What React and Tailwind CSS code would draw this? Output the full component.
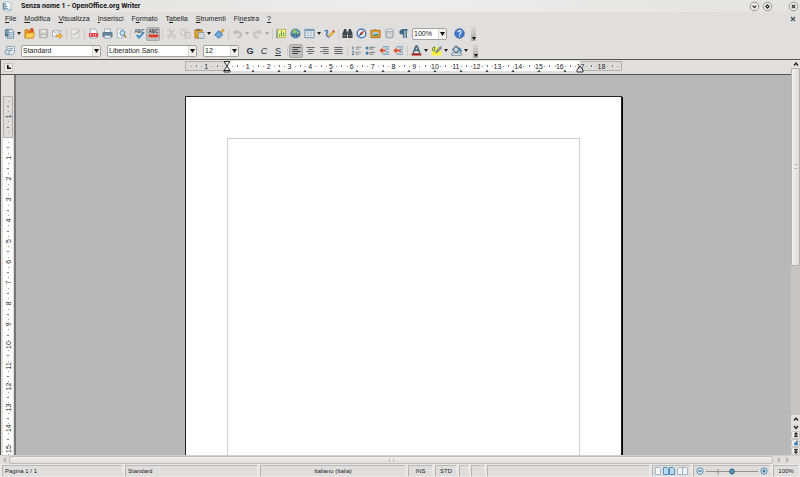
import React from "react";

const CM = 20.8;

function Svg({ children, className = "size-3" }) {
  return (
    <svg viewBox="0 0 12 12" className={className} fill="none" aria-hidden="true">
      {children}
    </svg>
  );
}

const sheet = (
  <path d="M2.5 1h5l2 2v8h-7z" fill="#f4f7f9" stroke="#7d97a8" strokeWidth="0.8" />
);

const icons = {
  writer: (
    <>
      <path d="M3.5 1h4.5l2 2v8h-6.5z" fill="#eef5f8" stroke="#93aebd" strokeWidth="0.7" />
      <path d="M1.5 2v8M1.5 3.5h3M1.5 6h4M1.5 8.5h5" stroke="#5b8ba6" strokeWidth="1.2" />
      <path d="M6 9.5h4" stroke="#78a8bf" />
    </>
  ),
  new: (
    <>
      <path d="M3.5 1.5h5l2 2v7.500h-7z" fill="#dfeaf1" stroke="#54788f" strokeWidth="0.9" />
      <path d="M1 1.500h4v7.500H1z" fill="#4b7490" />
      <path d="M2 3.500h2M2 5.500h2" stroke="#c9dbe6" strokeWidth="0.9" />
      <path d="M5.500 5h4M5.500 7h4M4 9h5" stroke="#6b8ea3" strokeWidth="0.8" />
    </>
  ),
  open: (
    <>
      <path d="M1 2h4l1 1h4.500v8H1z" fill="#e79a20" stroke="#b86d0c" strokeWidth="0.7" />
      <path d="M2.500 5.500h9L10 11H1z" fill="#ffd35a" stroke="#cf8a17" strokeWidth="0.7" />
      <path d="M5.500 5 9 1.500M6.500 1h3v3" stroke="#d8421e" strokeWidth="1.4" />
    </>
  ),
  save: (
    <>
      <rect x="1.500" y="1.500" width="9" height="9" rx="1" fill="#c9c9c8" stroke="#a7a7a6" />
      <path d="M3.500 2h5v3h-5z" fill="#e7e7e6" />
      <path d="M3 7h6v3.500H3z" fill="#dededd" stroke="#aaa" strokeWidth="0.6" />
    </>
  ),
  mail: (
    <>
      <path d="M.5 3h8.500v6H.5z" fill="#fafafa" stroke="#8f9aa3" strokeWidth="0.8" />
      <path d="m.7 3.300 4 3 4-3" stroke="#8f9aa3" strokeWidth="0.8" />
      <path d="M5 7.500h3V5.700L11.700 8.600 8 11.300V9.700H5z" fill="#f6b830" stroke="#b97e14" strokeWidth="0.5" />
    </>
  ),
  edit: (
    <>
      <path d="M1.500 1.500h8v9.500h-8z" fill="#e9e9e8" stroke="#bdbdbc" strokeWidth="0.8" />
      <path d="m4 8 1-2 5.500-4.500 1 1.200L6 7.500z" fill="#c2c2c1" />
      <path d="m3 6 1.500 3" stroke="#b5b5b4" />
    </>
  ),
  pdf: (
    <>
      {sheet}
      <path d="M1 5.500h10V9.500H1z" fill="#dc2f2f" />
      <path d="M2.700 8.500v-2h1.100M6 6.500v2M8.300 8.500v-2h1.300" stroke="#fff" strokeWidth="0.8" />
    </>
  ),
  print: (
    <>
      <path d="M3 1h6v4H3z" fill="#fff" stroke="#70879a" strokeWidth="0.7" />
      <path d="M1 5h10v4.500H1z" fill="#648aa5" stroke="#3f6179" strokeWidth="0.7" />
      <path d="M2.500 8h7v3h-7z" fill="#f2f5f7" stroke="#6c8292" strokeWidth="0.7" />
    </>
  ),
  preview: (
    <>
      <path d="M1.500 1h6v9.500h-6z" fill="#f8fafb" stroke="#97a9b5" strokeWidth="0.8" />
      <circle cx="7" cy="5.500" r="2.700" fill="#c0e0f4" stroke="#4a7fa3" />
      <path d="m8.800 7.500 2.200 3" stroke="#b07a2b" strokeWidth="1.600" />
    </>
  ),
  spell: (
    <>
      <Abc color="#39536a" />
      <path d="m3 7.500 2.500 3L10.500 5" stroke="#4490c4" strokeWidth="2.200" />
    </>
  ),
  auto: (
    <>
      <Abc color="#3c4852" />
      <path d="m.8 9.500 1.700-1.700 1.700 1.700 1.800-1.700 1.800 1.700 1.700-1.700 1.700 1.700" stroke="#e03a22" strokeWidth="2.200" />
    </>
  ),
  cut: (
    <>
      <path d="m3 1 5 7.500M9 1 4 8.500" stroke="#bcbcbb" strokeWidth="1.200" />
      <circle cx="3" cy="9.500" r="1.500" stroke="#bcbcbb" />
      <circle cx="9" cy="9.500" r="1.500" stroke="#bcbcbb" />
    </>
  ),
  copy: (
    <>
      <path d="M1 1.500h6v6H1zM5 5h6v6H5z" fill="#e4e4e3" stroke="#bcbcbb" strokeWidth="0.900" />
      <path d="M6 7.500h4M6 9h4M2 3.500h4" stroke="#c6c6c5" strokeWidth="0.700" />
    </>
  ),
  paste: (
    <>
      <path d="M1 2h8v9H1z" fill="#e5a52c" stroke="#9d6a13" strokeWidth="0.800" />
      <path d="M3 1h4v2H3z" fill="#6d6d6d" />
      <path d="M5 5h6v6H5z" fill="#f1f5f9" stroke="#6d8599" strokeWidth="0.800" />
      <path d="M6 7h4M6 9h4" stroke="#8ba2b5" strokeWidth="0.700" />
    </>
  ),
  brush: (
    <>
      <path d="m7 4 3-3.200 1.400 1.300L8.500 5.500z" fill="#e8ad36" stroke="#a87412" strokeWidth="0.500" />
      <path d="M5 3 9.500 7.200 5.500 11.300.8 7.500z" fill="#5fa4db" stroke="#2f72ad" strokeWidth="0.900" />
      <path d="m3 7.500 2.500 2M4.500 5.500 7 8" stroke="#b4daf5" strokeWidth="0.800" />
    </>
  ),
  undo: (
    <>
      <path d="M3 4.500h4a2.700 2.700 0 0 1 0 5.500H5.500" stroke="#bdbdbc" strokeWidth="2.200" />
      <path d="M4.800 1v7L.8 4.500z" fill="#bdbdbc" />
    </>
  ),
  redo: (
    <>
      <path d="M9 4.500H5A2.700 2.700 0 0 0 5 10h1.500" stroke="#c2c2c1" strokeWidth="2.200" />
      <path d="M7.200 1v7l4-3.500z" fill="#c2c2c1" />
    </>
  ),
  chart: (
    <>
      <path d="M1.500 1.500h9v9h-9z" fill="#fbf58d" stroke="#b7a832" strokeWidth="0.900" />
      <path d="M4 9V6.500M6 9V3M8.300 9V5" stroke="#4c9a5a" strokeWidth="1.200" />
      <path d="M1 1.500v9.500" stroke="#57829d" />
    </>
  ),
  globe: (
    <>
      <circle cx="6" cy="6" r="5" fill="#4f9dce" stroke="#2f6688" strokeWidth="0.700" />
      <path d="M3 2.500 6 1.500l2 2-2 2H3zM7 5l3-1-1 3z" fill="#9ccd4f" />
      <path d="M1.500 7.800h4M6.500 7.800h4" stroke="#3b5361" strokeWidth="2.400" />
      <path d="M2.500 7.800h2M7.500 7.800h2" stroke="#c7d6de" strokeWidth="0.900" />
    </>
  ),
  table: (
    <>
      <path d="M1 1.500h10v9H1z" fill="#fff" stroke="#6789a1" />
      <path d="M1 2.500h10" stroke="#6f9dbd" strokeWidth="2" />
      <path d="M4.300 2v8.500M7.600 2v8.500M1 5.500h10M1 8h10" stroke="#93acbd" strokeWidth="0.800" />
    </>
  ),
  draw: (
    <>
      <path d="M.8 3.500c3-2 4 .5 2.500 2s0 4.500 3 4" stroke="#3d78ae" strokeWidth="1.500" />
      <path d="m5 9.500 1-2.500 4.300-4 1.500 1.600-4.500 4z" fill="#f8c44a" stroke="#b77b18" strokeWidth="0.600" />
      <path d="m9 3.300 1.300-1.300 1.500 1.700-1.200 1.300z" fill="#df4c3c" />
    </>
  ),
  find: (
    <>
      <path d="M2.500 1h2L5.500 5v6H.5V6zM7.500 1h2l2 5v5h-5V5z" fill="#3d454b" />
      <path d="M5 4h2v3H5z" fill="#596268" />
      <path d="M1.500 8.500h2.800M7.700 8.500h2.800" stroke="#8f9ba3" />
    </>
  ),
  navigator: (
    <>
      <circle cx="6" cy="6" r="4.700" fill="#eef6fc" stroke="#2f6fb2" strokeWidth="1.400" />
      <path d="M9.500 2.500 7.200 7.200 4.800 4.800z" fill="#df3b26" />
      <path d="M2.500 9.500 4.800 4.800l2.400 2.400z" fill="#52616c" />
    </>
  ),
  gallery: (
    <>
      <path d="M1 2.500h10v8H1z" fill="#e79f2e" stroke="#a9650f" strokeWidth="0.900" />
      <path d="M3 4.500h6v4H3z" fill="#9dd0ed" />
      <path d="m3 8.500 2-2 1.500 1L8 6l1 2.500z" fill="#3d7e45" />
      <path d="M5 2.200 6 1l1 1.200" stroke="#8c6a35" strokeWidth="0.700" />
    </>
  ),
  sources: (
    <>
      <path d="M2 2.500v7c0 2 8 2 8 0v-7z" fill="#c2c9cd" stroke="#808c94" strokeWidth="0.800" />
      <ellipse cx="6" cy="2.500" rx="4" ry="1.400" fill="#eef1f3" stroke="#8b979f" strokeWidth="0.800" />
      <path d="M4 5.500v4M6 6v4M8 5.500v4" stroke="#e3e7ea" strokeWidth="0.700" />
    </>
  ),
  marks: (
    <>
      <path d="M6 1.500H4.200a2.700 2.700 0 0 0 0 5.500H6z" fill="#3f6b85" />
      <path d="M6.300 1.500V11M9 1.500V11M4.500 1.900h6" stroke="#3f6b85" strokeWidth="1.500" />
    </>
  ),
  help: (
    <>
      <circle cx="6" cy="6" r="5.200" fill="#3f78c9" stroke="#275196" strokeWidth="0.700" />
      <path d="M4.200 4.600c0-2.300 3.600-2.300 3.600 0 0 1.300-1.800 1.300-1.800 2.900M6 8.500v1.200" stroke="#fff" strokeWidth="1.200" />
    </>
  ),
  styles: (
    <>
      <path d="M3 1.500h8.500v6.500L9 10.500H4z" fill="#e5eef4" stroke="#7b98ab" strokeWidth="0.900" />
      <path d="M5 4h4.500M6 6h3.500" stroke="#6f94ad" strokeWidth="1" />
      <circle cx="3.500" cy="7.800" r="2.500" fill="#d3dfe7" stroke="#6d899c" strokeWidth="0.900" />
    </>
  ),
  alignLeft: <path d="M1.500 2.700h9M1.500 4.900h6M1.500 7.100h9M1.500 9.300h6" stroke="#3f4448" strokeWidth="1.300" />,
  alignCenter: <path d="M1.500 2.700h9M3.500 4.900h5M1.500 7.100h9M3.500 9.300h5" stroke="#666b6f" strokeWidth="1.200" />,
  alignRight: <path d="M1.500 2.700h9M4.500 4.900h6M1.500 7.100h9M4.500 9.300h6" stroke="#666b6f" strokeWidth="1.200" />,
  justify: <path d="M1.500 2.700h9M1.500 4.900h9M1.500 7.100h9M1.500 9.300h9" stroke="#5f6569" strokeWidth="1.300" />,
  numbered: (
    <>
      <path d="M2 1.500v3.500M1.200 7h1.600v1.500L1.200 10.500h2" stroke="#3f7195" />
      <path d="M5 2.500h6M5 4.500h4M5 8h6M5 10h4" stroke="#7d8488" strokeWidth="0.900" />
    </>
  ),
  bullets: (
    <>
      <circle cx="2.300" cy="3.300" r="1.700" fill="#3f7da8" />
      <circle cx="2.300" cy="8.800" r="1.700" fill="#3f7da8" />
      <path d="M5 2.500h6M5 4.500h4M5 8h6M5 10h4" stroke="#6a7074" strokeWidth="1" />
    </>
  ),
  indentLess: (
    <>
      <path d="M4 2h7M7 4.500h4M7 7.500h4M4 10h7" stroke="#4a8fbe" />
      <path d="M.3 6 4 2.700V5h3v2H4v2.300z" fill="#d9502b" />
    </>
  ),
  indentMore: (
    <>
      <path d="M4 2h7M7 4.500h4M7 7.500h4M4 10h7" stroke="#4a8fbe" />
      <path d="M.3 6 4 2.700V5h4.500v2H4v2.300z" fill="#d9502b" />
    </>
  ),
  fontColor: (
    <>
      <path d="m2.500 8.500 3-7.500h1l3 7.500M3.800 5.700h4.400" stroke="#41657e" strokeWidth="1.700" />
      <path d="M.7 9h10.600v2.500H.7z" fill="#a52a24" />
    </>
  ),
  highlight: (
    <>
      <path d="M.8 2.500h7.700l2.700 5v4H.8z" fill="#fbf53b" />
      <path d="M1.500 3.500 4 2v4l-2 .5z" stroke="#557085" />
      <path d="m5 8.500 1-2.500 4.300-4.500 1.500 1.500L7.500 7.500z" fill="#90a3b1" stroke="#4f6474" strokeWidth="0.700" />
    </>
  ),
  fill: (
    <>
      <path d="M1.800 5 5.500 1.200l4 4.300-4 3z" fill="#c9dbe6" stroke="#436277" strokeWidth="1.200" />
      <path d="M8 3c3 1 3 2.500 2.800 5" stroke="#3e8ac0" strokeWidth="1.700" />
      <path d="M.8 8.800h10.400v2.500H.8z" fill="#f0f3f4" stroke="#5e7686" strokeWidth="0.800" />
    </>
  ),
};

function Abc({ color }) {
  return (
    <text x="6" y="5" textAnchor="middle" fontSize="5" fontWeight="700" fill={color}>
      ABC
    </text>
  );
}

function Tool({ icon, label, pressed, children }) {
  return (
    <button
      type="button"
      aria-label={label}
      className={
        pressed
          ? "flex h-3.5 w-3.5 shrink-0 items-center justify-center rounded-xs border border-[#aaa9a8] bg-[#bfbebd]"
          : "flex h-3.5 w-3.5 shrink-0 items-center justify-center"
      }
    >
      {icon ? <Svg className="size-[11px] shrink-0">{icons[icon]}</Svg> : children}
    </button>
  );
}

function Drop({ label, dim }) {
  return (
    <button type="button" aria-label={label} className="flex h-3.5 w-1.5 shrink-0 items-center justify-center">
      <svg viewBox="0 0 4 3" className="h-[3px] w-1" aria-hidden="true">
        <path d="M0 0h4L2 3z" fill={dim ? "#aaa" : "#222"} />
      </svg>
    </button>
  );
}

function Sep() {
  return (
    <span className="flex h-2.5 w-1 shrink-0 justify-center">
      <span className="w-px bg-[#cbcac9]" />
    </span>
  );
}

function Combo({ label, value, className }) {
  return (
    <div className={`relative h-3 shrink-0 ${className}`}>
      <select
        aria-label={label}
        defaultValue={value}
        className="block h-3 w-full appearance-none rounded-xs border border-[#a3a2a1] bg-white pl-px text-[7px] leading-[10px] text-[#222] outline-none"
      >
        <option>{value}</option>
      </select>
      <span className="pointer-events-none absolute inset-y-px right-px flex w-2 items-center justify-center border-l border-[#dad9d8] bg-[#f0efee]">
        <svg viewBox="0 0 5 4" className="h-1 w-[5px]" aria-hidden="true">
          <path d="M0 0h5L2.500 4z" fill="#111" />
        </svg>
      </span>
    </div>
  );
}

function Overflow() {
  return (
    <button
      type="button"
      aria-label="Altri comandi"
      className="flex h-3.5 w-[5px] shrink-0 items-end justify-center bg-linear-to-b from-[#dad9d8] to-[#aaa9a8] pb-px"
    >
      <svg viewBox="0 0 4 3" className="h-[3px] w-1" aria-hidden="true">
        <path d="M0 0h4L2 3z" fill="#111" />
      </svg>
    </button>
  );
}

const menus = [
  ["", "F", "ile"],
  ["", "M", "odifica"],
  ["", "V", "isualizza"],
  ["", "I", "nserisci"],
  ["F", "o", "rmato"],
  ["T", "a", "bella"],
  ["", "S", "trumenti"],
  ["Fi", "n", "estra"],
  ["", "?", ""],
];

function WindowButton({ label, d }) {
  return (
    <button type="button" aria-label={label} className="flex size-[11px] items-center justify-center">
      <Svg className="size-[11px]">
        <circle cx="6" cy="6" r="4.700" fill="#eeedec" stroke="#8d8c8b" />
        <path d={d} stroke="#2c2c2c" strokeWidth="1.300" />
      </Svg>
    </button>
  );
}

function ticks(from, to, origin) {
  const out = [];
  for (let q = from; q <= to; q++) {
    if (q % 4 !== 0) out.push({ at: origin + (q * CM) / 4, half: q % 2 === 0 });
  }
  return out;
}

function HorizontalRuler() {
  const origin = 42;
  const tabs = Array.from({ length: 13 }, (_, i) => origin + (i + 1) * 1.25 * CM);
  return (
    <svg width="437" height="13" viewBox="0 0 437 13" className="shrink-0" role="img" aria-label="Righello orizzontale">
      <rect x="0.500" y="1.500" width="436" height="9" fill="#dddcdb" stroke="#b2b1b0" />
      <rect x={origin} y="1" width="353" height="10" fill="#fff" />
      {ticks(-7, 75, origin).map((t) => (
        <rect key={t.at} x={Math.round(t.at)} y={t.half ? 5 : 6} width="1" height={t.half ? 2 : 1} fill={t.half ? "#777" : "#999"} />
      ))}
      <g fontSize="7" fill="#222" textAnchor="middle">
        <text x={origin - CM} y="8.500">1</text>
        {Array.from({ length: 18 }, (_, i) => (
          <text key={i} x={origin + (i + 1) * CM} y="8.500">{i + 1}</text>
        ))}
      </g>
      {tabs.map((x) => (
        <path key={x} d={`M${x - 1.500} 12h3l-1.500-2.500z`} fill="#444" />
      ))}
      <path d={`M${origin - 3} 1.500h6l-3 4.500zM${origin - 3} 10.500h6l-3-4.500zM${origin - 3} 12h6v-1.500h-6z`} fill="#e8e8e8" stroke="#222" strokeWidth="0.900" />
      <path d="M392 12v-2l3-4 3 4v2z" fill="#e8e8e8" fillOpacity="0.600" stroke="#222" strokeWidth="0.900" />
    </svg>
  );
}

function VerticalRuler() {
  const origin = 41;
  return (
    <svg width="10" height="560" viewBox="0 0 10 560" className="shrink-0" role="img" aria-label="Righello verticale">
      <rect x="0.500" y="0.500" width="9" height="41" fill="#dddcdb" stroke="#b2b1b0" />
      <rect x="0" y="42" width="10" height="518" fill="#fff" />
      {ticks(-7, 98, origin).map((t) => (
        <rect key={t.at} x={t.half ? 4 : 5} y={Math.round(t.at)} width={t.half ? 2 : 1} height="1" fill={t.half ? "#777" : "#999"} />
      ))}
      <g fontSize="7" fill="#222" textAnchor="middle">
        {[-1, ...Array.from({ length: 15 }, (_, i) => i + 1)].map((n) => (
          <text key={n} transform={`translate(7.500 ${origin + n * CM}) rotate(-90)`}>{Math.abs(n)}</text>
        ))}
      </g>
    </svg>
  );
}

function ScrollButton({ label, d, boxed, color = "#222", className = "h-2 w-full" }) {
  return (
    <button
      type="button"
      aria-label={label}
      className={`flex shrink-0 items-center justify-center ${className} ${boxed ? "rounded-xs border border-[#c6c5c4] bg-[#efeeed]" : ""}`}
    >
      <svg viewBox="0 0 6 6" className="size-1.5 shrink-0" fill="none" aria-hidden="true">
        <path d={d} stroke={color} strokeWidth="1.400" />
      </svg>
    </button>
  );
}

function Cell({ className, children }) {
  return (
    <div
      className={`flex h-[11px] min-w-0 items-center border-t border-l border-t-[#bab9b8] border-l-[#b5b4b3] bg-[#dfdedd] px-0.5 ${className}`}
    >
      {children}
    </div>
  );
}

function ZoomButton({ label, d }) {
  return (
    <button type="button" aria-label={label} className="size-2 shrink-0">
      <Svg className="size-2">
        <circle cx="6" cy="6" r="4.800" fill="#d7e8f3" stroke="#4d83ab" strokeWidth="1.300" />
        <path d={d} stroke="#28587c" strokeWidth="1.600" />
      </Svg>
    </button>
  );
}

export default function App() {
  return (
    <div className="flex h-screen flex-col overflow-hidden bg-[#e0dfde] font-['Liberation_Sans',Arial,sans-serif] text-[7px] leading-[10px] text-[#222]">
      <header className="flex h-3 shrink-0 items-center bg-linear-to-r from-[#e3e2e1] via-[#ededed] to-[#e3e3e2] pr-px pl-0.5">
        <Svg className="size-[11px]">{icons.writer}</Svg>
        <h1 className="ml-2 flex-1 font-[Roboto,'Liberation_Sans',sans-serif] text-[7px] font-bold text-[#111]">
          Senza nome 1 - OpenOffice.org Writer
        </h1>
        <div className="flex items-center gap-0.5">
          <WindowButton label="Riduci a icona" d="m4 5 2 2.200L8 5" />
          <WindowButton label="Ingrandisci" d="M6 4.200 7.800 6 6 7.800 4.200 6z" />
        </div>
        <div className="ml-[15px] flex">
          <WindowButton label="Chiudi" d="m4.200 4.200 3.600 3.600M7.800 4.200 4.200 7.800" />
        </div>
      </header>

      <nav className="flex h-[13px] shrink-0 items-center justify-between pr-1 pl-[5px]">
        <div className="flex gap-2">
          {menus.map(([a, key, b]) => (
            <button type="button" key={a + key + b} className="leading-[10px]">
              {a}
              <span className="underline">{key}</span>
              {b}
            </button>
          ))}
        </div>
        <button type="button" aria-label="Chiudi documento">
          <svg viewBox="0 0 6 6" className="size-1.5" aria-hidden="true">
            <path d="m1 1 4 4M5 1 1 5" stroke="#3f566b" strokeWidth="1.200" />
          </svg>
        </button>
      </nav>

      <div role="toolbar" aria-label="Standard" className="flex h-[17px] shrink-0 items-center pl-0.5">
        <Tool icon="new" label="Nuovo" />
        <Drop label="Altri tipi di documento" />
        <Tool icon="open" label="Apri" />
        <Tool icon="save" label="Salva" />
        <Tool icon="mail" label="Documento come e-mail" />
        <Sep />
        <Tool icon="edit" label="Modifica file" />
        <Sep />
        <Tool icon="pdf" label="Esporta come PDF" />
        <Tool icon="print" label="Stampa" />
        <Tool icon="preview" label="Anteprima" />
        <Sep />
        <Tool icon="spell" label="Controllo ortografico" />
        <Tool icon="auto" label="Controllo automatico" pressed />
        <Sep />
        <Tool icon="cut" label="Taglia" />
        <Tool icon="copy" label="Copia" />
        <Tool icon="paste" label="Incolla" />
        <Drop label="Opzioni incolla" />
        <Tool icon="brush" label="Pennello di formato" />
        <Sep />
        <Tool icon="undo" label="Annulla" />
        <Drop label="Elenco annulla" dim />
        <Tool icon="redo" label="Ripristina" />
        <Drop label="Elenco ripristina" dim />
        <Sep />
        <Tool icon="chart" label="Grafico" />
        <Tool icon="globe" label="Collegamento" />
        <Tool icon="table" label="Tabella" />
        <Drop label="Dimensioni tabella" />
        <Tool icon="draw" label="Disegno" />
        <Sep />
        <Tool icon="find" label="Cerca e sostituisci" />
        <Tool icon="navigator" label="Navigatore" />
        <Tool icon="gallery" label="Galleria" />
        <Tool icon="sources" label="Sorgenti dati" />
        <Tool icon="marks" label="Caratteri non stampabili" />
        <div className="ml-0.5 flex items-center gap-[5px]">
          <Combo label="Zoom" value="100%" className="w-[35px]" />
          <Tool icon="help" label="Guida" />
          <Overflow />
        </div>
      </div>

      <div role="toolbar" aria-label="Formattazione" className="flex h-[17px] shrink-0 items-center pl-0.5">
        <Tool icon="styles" label="Stili e formattazione" />
        <div className="mr-1 ml-[5px] flex gap-1.5">
          <Combo label="Stile" value="Standard" className="w-20" />
          <Combo label="Tipo di carattere" value="Liberation Sans" className="w-[90px]" />
          <Combo label="Dimensione" value="12" className="w-9" />
        </div>
        <Tool label="Grassetto">
          <span className="text-[9px] font-bold text-[#2b3842]">G</span>
        </Tool>
        <Tool label="Corsivo">
          <span className="text-[9px] text-[#2b3842] italic">C</span>
        </Tool>
        <Tool label="Sottolineato">
          <span className="text-[9px] text-[#2b3842] underline">S</span>
        </Tool>
        <Sep />
        <Tool icon="alignLeft" label="Allinea a sinistra" pressed />
        <Tool icon="alignCenter" label="Centrato" />
        <Tool icon="alignRight" label="Allinea a destra" />
        <Tool icon="justify" label="Giustificato" />
        <Sep />
        <Tool icon="numbered" label="Elenco numerato" />
        <Tool icon="bullets" label="Elenco puntato" />
        <Tool icon="indentLess" label="Riduci rientro" />
        <Tool icon="indentMore" label="Aumenta rientro" />
        <Sep />
        <Tool icon="fontColor" label="Colore carattere" />
        <Drop label="Scegli colore carattere" />
        <Tool icon="highlight" label="Evidenzia" />
        <Drop label="Scegli colore evidenziatore" />
        <Tool icon="fill" label="Colore di sfondo" />
        <Drop label="Scegli colore di sfondo" />
        <div className="ml-1 flex">
          <Overflow />
        </div>
      </div>

      <main className="flex min-h-0 flex-1 border-t border-l border-[#555]">
        <div className="flex min-w-0 flex-1 flex-col">
          <div className="flex h-[15px] shrink-0 border-b border-[#555]">
            <div className="flex w-[15px] shrink-0 items-center justify-center">
              <button type="button" aria-label="Tipo di tabulazione" className="flex size-[9px] items-center justify-center border border-[#c4c3c2] bg-[#efeeed]">
                <svg viewBox="0 0 4 4" className="size-1" aria-hidden="true">
                  <path d="M.8 0v3.200H4" stroke="#111" strokeWidth="1.600" fill="none" />
                </svg>
              </button>
            </div>
            <div className="flex min-w-0 flex-1 justify-center">
              <HorizontalRuler />
            </div>
          </div>
          <div className="flex min-h-0 flex-1 overflow-hidden">
            <div className="flex w-[15px] shrink-0 justify-center overflow-hidden border-r-2 border-[#777] pt-[21px]">
              <VerticalRuler />
            </div>
            <div className="flex min-w-0 flex-1 justify-center overflow-hidden bg-[#b8b8b8] pt-[21px]">
              <article className="h-[618px] w-[437px] shrink-0 border border-[#222] bg-white px-[41px] py-[41px] shadow-[1px_1px_0_#000]">
                <div role="textbox" aria-label="Testo del documento" className="h-full border border-[#cfcfcf]" />
              </article>
            </div>
          </div>
        </div>

        <div className="flex w-[9px] shrink-0 flex-col bg-[#e3e2e1]">
          <ScrollButton label="Scorri su" d="m1 4.500 2-2.500 2 2.500" />
          <div className="flex min-h-0 flex-1 flex-col bg-[#c6c5c4]">
            <div className="flex h-[57%] items-center justify-center rounded-xs border border-[#b4b3b2] bg-linear-to-r from-[#f3f2f1] to-[#dddcdb]">
              <span className="h-[5px] w-[3px] border-y border-[#b5b4b3]" />
            </div>
          </div>
          <ScrollButton label="Scorri su" d="m1 4.500 2-2.500 2 2.500" />
          <ScrollButton label="Scorri giù" d="m1 2 2 2.500L5 2" />
          <ScrollButton label="Pagina precedente" d="m1.500 2.500L3 1l1.500 1.500M1.500 5 3 3.500 4.500 5" boxed />
          <ScrollButton label="Navigazione" d="M1 4.500h4M1.500 3h3M3 1.500h2" color="#467fa8" boxed />
          <ScrollButton label="Pagina successiva" d="M1.500 1 3 2.500 4.500 1M1.500 3.500 3 5l1.500-1.500" boxed />
        </div>
      </main>

      <div className="flex h-[9px] shrink-0 items-center border-t border-[#d0cfce] pr-[9px] pl-px">
        <ScrollButton label="Scorri a sinistra" d="M4 1 2 3l2 2" color="#aaa" className="h-2 w-2" />
        <div className="flex h-2 flex-1 items-center justify-center rounded-xs border border-[#bdbcbb] bg-linear-to-b from-[#f0efee] to-[#dddcdb]">
          <span className="h-[3px] w-[5px] border-x border-[#b5b4b3]" />
        </div>
        <ScrollButton label="Scorri a sinistra" d="M4 1 2 3l2 2" color="#aaa" className="ml-0.5 h-2 w-2" />
        <ScrollButton label="Scorri a destra" d="m2 1 2 2-2 2" color="#aaa" className="h-2 w-2" />
      </div>

      <footer className="flex h-[13px] shrink-0 items-center gap-[3px] bg-[#e8e7e6] px-0.5 text-[6px] leading-2 whitespace-nowrap">
        <Cell className="w-[120px]">Pagina 1 / 1</Cell>
        <Cell className="w-[132px]">Standard</Cell>
        <Cell className="w-[145px] justify-center">Italiano (Italia)</Cell>
        <Cell className="w-6 justify-center">INS</Cell>
        <Cell className="w-[21px] justify-center">STD</Cell>
        <Cell className="w-[9px]" />
        <Cell className="w-[13px]" />
        <Cell className="flex-1" />
        <Cell className="w-[38px] justify-between">
          <button type="button" aria-label="Pagina singola">
            <svg viewBox="0 0 6 8" className="h-2 w-1.5" aria-hidden="true">
              <path d="M.5.5h3.500l1.500 1.500v5.500h-5z" fill="#f4f8fa" stroke="#94abba" strokeWidth="0.800" />
            </svg>
          </button>
          <button type="button" aria-label="Più pagine">
            <svg viewBox="0 0 12 8" className="h-2 w-3" aria-hidden="true">
              <path d="M.5.5H4l1.500 1.500v5.500h-5zM6.500.5H10l1.500 1.500v5.500h-5z" fill="#b9daf0" stroke="#4c86b0" strokeWidth="0.900" />
            </svg>
          </button>
          <button type="button" aria-label="Modalità libro">
            <svg viewBox="0 0 11 8" className="h-2 w-[11px]" aria-hidden="true">
              <path d="M5.500.5v7h-5V2L2 .5zM5.500.5v7h5V2L9 .5z" fill="#f1f5f8" stroke="#94abba" strokeWidth="0.800" />
            </svg>
          </button>
        </Cell>
        <Cell className="w-[77px]">
          <ZoomButton label="Riduci" d="M3.500 6h5" />
          <div className="relative mx-0.5 h-2 flex-1">
            <input
              type="range"
              aria-label="Fattore di zoom"
              defaultValue="50"
              className="absolute inset-0 h-2 w-full cursor-pointer appearance-none opacity-0"
            />
            <svg viewBox="0 0 54 8" className="pointer-events-none h-2 w-full" aria-hidden="true">
              <path d="M0 4.500h54M12.500 1.500v6M27.500 1v7" stroke="#8f8e8d" />
              <circle cx="27" cy="4.500" r="2.500" fill="#5b93b8" stroke="#2f5f80" />
            </svg>
          </div>
          <ZoomButton label="Aumenta" d="M3.500 6h5M6 3.500v5" />
        </Cell>
        <Cell className="w-[25px] justify-center">100%</Cell>
      </footer>
    </div>
  );
}
